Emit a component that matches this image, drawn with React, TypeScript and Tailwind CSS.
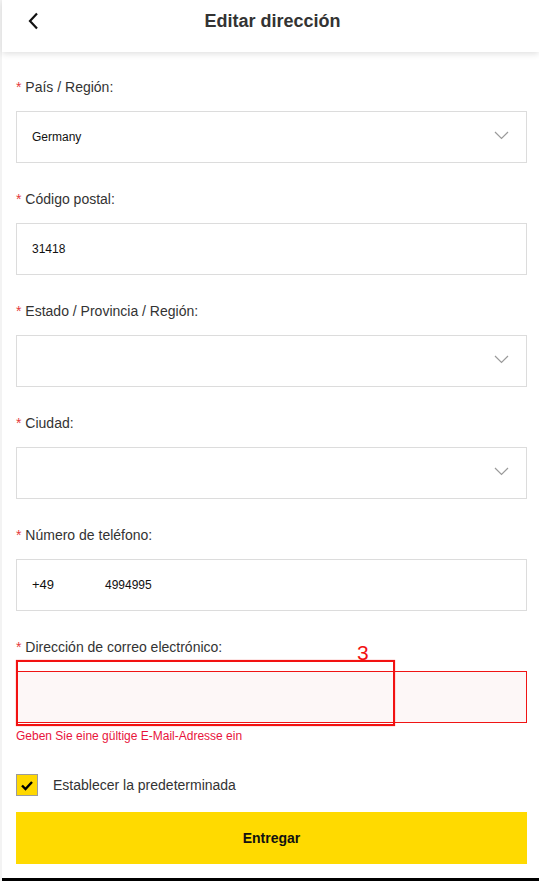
import React from "react";

const Chevron = () => (
  <svg width="15" height="9" viewBox="0 0 15 9" className="absolute right-[17px] top-[19px]">
    <polyline points="1,1 7.5,7.5 14,1" fill="none" stroke="#9a9a9a" strokeWidth="1.2" />
  </svg>
);

function Label({ text }: { text: string }) {
  return (
    <div className="text-[14px] leading-[16px] text-[#333]">
      <span className="text-[#e4393c]">*</span> {text}
    </div>
  );
}

function Field({
  label,
  value,
  select,
  children,
}: {
  label: string;
  value?: string;
  select?: boolean;
  children?: React.ReactNode;
}) {
  return (
    <div className="mb-[28px]">
      <Label text={label} />
      <div className="relative mt-[16px] h-[52px] border border-[#dcdcdc] bg-white flex items-center pl-[15px] text-[12px] text-[#111]">
        {children ?? value}
        {select && <Chevron />}
      </div>
    </div>
  );
}

export default function App() {
  return (
    <div
      className="min-h-[881px] w-[539px] bg-[#f3f3f3] flex"
      style={{ fontFamily: '"Liberation Sans", Arial, sans-serif' }}
    >
      <div className="ml-[2px] flex-1 bg-white relative flex flex-col">
        <header className="h-[52px] bg-white shadow-[0_2px_6px_rgba(0,0,0,0.12)] relative flex items-center justify-center z-10">
          <svg width="14" height="20" viewBox="0 0 14 20" className="absolute left-[25px] top-[11px]">
            <polyline points="10,2.5 3,10 10,17.5" fill="none" stroke="#111" strokeWidth="2.2" />
          </svg>
          <h1 className="text-[18px] font-bold text-[#333] -mt-[9px] ml-[4px]">Editar dirección</h1>
        </header>
        <main className="pl-[14px] pr-[12px] pt-[27px] flex-1">
          <Field label="País / Región:" value="Germany" select />
          <Field label="Código postal:" value="31418" />
          <Field label="Estado / Provincia / Región:" select />
          <Field label="Ciudad:" select />
          <Field label="Número de teléfono:">
            <span className="w-[73px] text-[13px]">+49</span>
            <span>4994995</span>
          </Field>
          <div className="relative">
            <Label text="Dirección de correo electrónico:" />
            <div className="mt-[16px] h-[52px] border border-[#f01414] bg-[#fdf7f7]" />
            <div className="mt-[6px] text-[12px] leading-[14px] text-[#e8143c]">
              Geben Sie eine gültige E-Mail-Adresse ein
            </div>
            <div className="absolute left-0 top-[21px] w-[379px] h-[66px] border-2 border-[#f21212] shadow-[0_0_1px_rgba(240,0,0,0.6)]" />
            <div className="absolute left-[341px] top-[3px] text-[21px] leading-[21px] text-[#f21212]">3</div>
          </div>
          <div className="mt-[31px] flex items-center">
            <div className="w-[22px] h-[22px] bg-[#ffd800] border border-[#9c9c9c] flex items-center justify-center">
              <svg width="14" height="11" viewBox="0 0 14 11">
                <polyline points="2,5.5 5.5,9 12,2" fill="none" stroke="#000" strokeWidth="2.4" />
              </svg>
            </div>
            <span className="ml-[15px] text-[14px] text-[#333]">Establecer la predeterminada</span>
          </div>
          <button className="mt-[16px] w-full h-[52px] bg-[#ffda00] text-[14px] font-bold text-[#111] flex items-center justify-center">
            Entregar
          </button>
        </main>
        <div className="h-[3px] bg-black mt-auto" />
      </div>
    </div>
  );
}
